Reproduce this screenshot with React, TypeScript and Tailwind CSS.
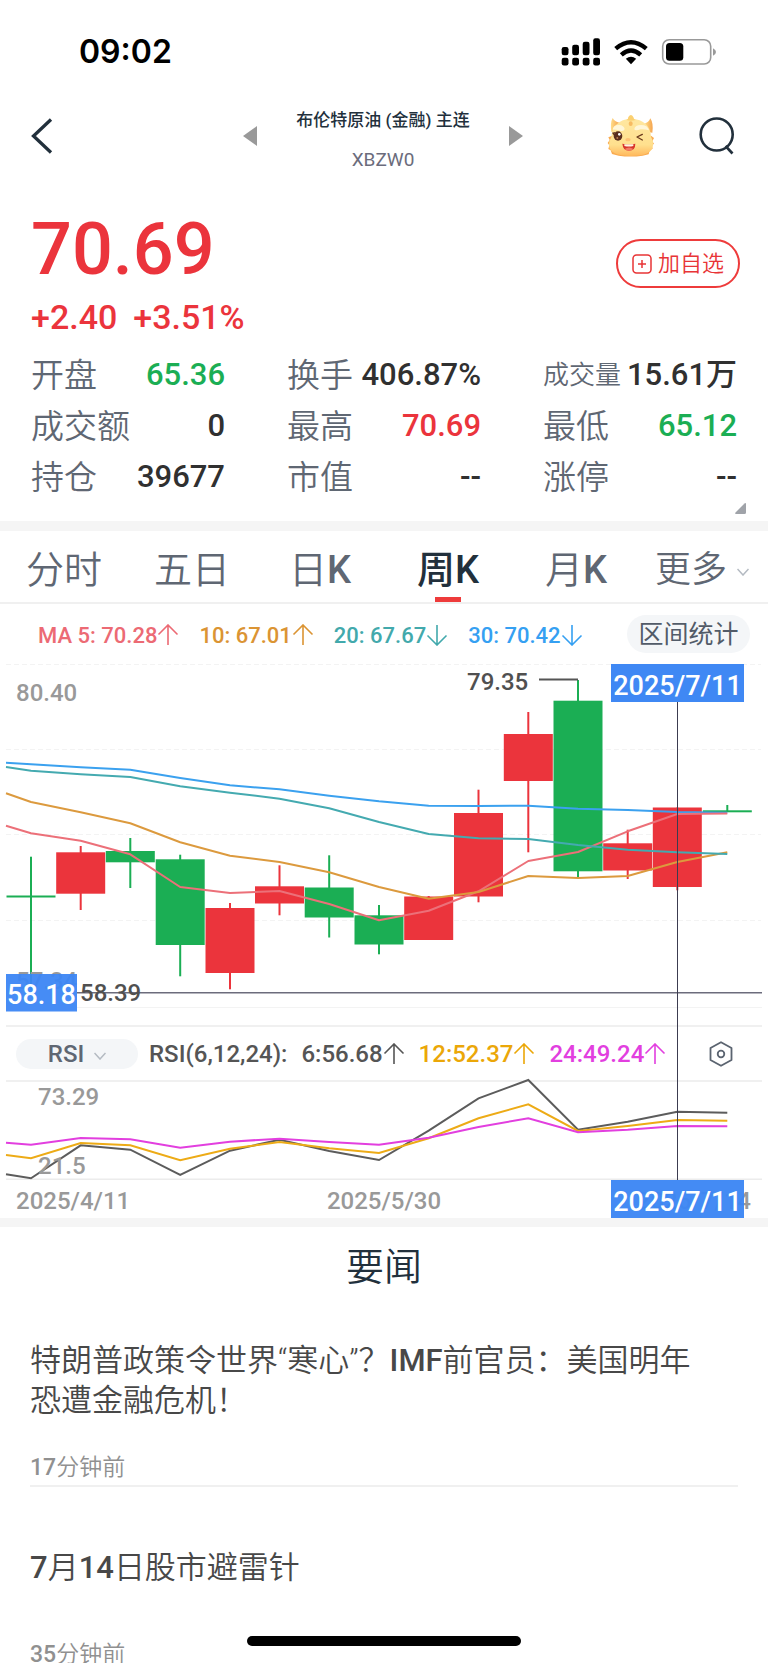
import React from "react";

const GREEN = "#1bae54";
const RED = "#eb343c";

type Candle = { color: string; top: number; bottom: number; high: number; low: number };

const xs = [31, 80.7, 130.3, 180.2, 230, 279.5, 329.2, 379, 428.7, 478.5, 528.3, 578, 627.7, 677.3, 727.3];

const candles: Candle[] = [
  { color: GREEN, top: 895.5, bottom: 897.5, high: 856.7, low: 990 },
  { color: RED, top: 852.3, bottom: 893.7, high: 846, low: 910 },
  { color: GREEN, top: 851, bottom: 862.3, high: 838, low: 888 },
  { color: GREEN, top: 859.3, bottom: 945, high: 854.7, low: 976.3 },
  { color: RED, top: 908, bottom: 973, high: 903, low: 989.3 },
  { color: RED, top: 886.3, bottom: 903.5, high: 865.3, low: 915.3 },
  { color: GREEN, top: 887.5, bottom: 917.5, high: 855.3, low: 937.5 },
  { color: GREEN, top: 915.3, bottom: 944.5, high: 905, low: 954.3 },
  { color: RED, top: 896.5, bottom: 940, high: 896, low: 940 },
  { color: RED, top: 813, bottom: 896.5, high: 789.7, low: 902.3 },
  { color: RED, top: 734, bottom: 781, high: 712, low: 852.3 },
  { color: GREEN, top: 700.7, bottom: 871.3, high: 680, low: 877.7 },
  { color: RED, top: 843.3, bottom: 870.5, high: 829.7, low: 879 },
  { color: RED, top: 807.5, bottom: 887, high: 807.5, low: 890.3 },
  { color: GREEN, top: 810.3, bottom: 812.3, high: 805, low: 812 },
];

const averages = [
  { color: "#3ba1ef", ys: [762.7, 764.3, 767.3, 769.7, 778, 785.3, 789.3, 795.7, 801.3, 805.7, 806, 805.7, 808.7, 810, 812, 812.7] },
  { color: "#ec7079", ys: [825.7, 833.3, 840.7, 854.3, 887, 893, 891, 904, 920.3, 910.7, 891.3, 861, 852, 831.3, 814, 813.5] },
  { color: "#dc9a3e", ys: [793.3, 802, 812.3, 823.3, 842.3, 855.7, 862, 872.3, 887, 898.7, 892, 876, 878, 876, 862, 852.3] },
  { color: "#44aab0", ys: [767, 770.7, 774.3, 777, 786.3, 792.7, 798.7, 808.3, 822, 834, 838.3, 839, 845, 849.7, 852.3, 854] },
];

const rsiLines = [
  { color: "#5c5c5c", ys: [1174.3, 1178.3, 1145.3, 1149.7, 1175, 1150.7, 1139.7, 1151, 1160, 1130.7, 1098.3, 1080, 1129.7, 1121.7, 1111.7, 1112.7] },
  { color: "#edab16", ys: [1155, 1158.3, 1143, 1145.3, 1160.3, 1148.7, 1142, 1148.3, 1153, 1138.3, 1118.3, 1104.3, 1131, 1126, 1120, 1120.7] },
  { color: "#e23fdf", ys: [1142.7, 1144.7, 1138, 1139.3, 1147.7, 1141.7, 1138.7, 1142, 1144.7, 1137.7, 1127, 1118.3, 1132.3, 1129.7, 1126, 1126.3] },
];

const toPoints = (ys: number[]) => ys.map((y, i) => `${i === 0 ? 6 : xs[i - 1]},${y}`).join(" ");

function Arrow({ down = false }: { down?: boolean }) {
  return (
    <svg className="h-[22px] w-[22px] shrink-0" viewBox="0 0 22 22" fill="none" stroke="currentColor" strokeWidth="1.6">
      {down ? <path d="M11 1v20M1.5 11.5 11 21l9.500-9.500" /> : <path d="M11 21V1M1.500 10.500 11 1l9.500 9.500" />}
    </svg>
  );
}

function StatusBar() {
  return (
    <div className="flex h-[104px] shrink-0 items-center justify-between pr-[51px] pl-[79px]">
      <span className="font-[Inter] text-[32px] font-semibold text-black">09:02</span>
      <svg className="h-[30px] w-[156px]" viewBox="561 36 156 30" aria-label="signal, wifi, battery">
        <g fill="#000">
          <rect x="561.7" y="46" width="6.800" height="8.200" rx="2.200" />
          <rect x="572.200" y="43.700" width="6.800" height="10.500" rx="2.200" />
          <rect x="582.700" y="40.700" width="6.800" height="13.500" rx="2.200" />
          <rect x="593.200" y="37.300" width="6.800" height="16.900" rx="2.200" />
          <rect x="561.700" y="56.800" width="6.800" height="7.700" rx="2.200" />
          <rect x="572.200" y="56.800" width="6.800" height="7.700" rx="2.200" />
          <rect x="582.700" y="56.800" width="6.800" height="7.700" rx="2.200" />
          <rect x="593.200" y="56.800" width="6.800" height="7.700" rx="2.200" />
          <path d="M631 63.200 625.800 57.800Q631 53.700 636.200 57.800Z" />
        </g>
        <g fill="none" stroke="#000" strokeWidth="4.400">
          <path d="M615.700 47.600Q631 34.800 646.300 47.600" />
          <path d="M621.300 53.800Q631 45.300 640.700 53.800" />
        </g>
        <rect x="662.700" y="38.700" width="48" height="24.300" rx="6.500" fill="none" stroke="#999" strokeWidth="1.600" />
        <rect x="666" y="42" width="17.300" height="17.800" rx="3.500" fill="#000" />
        <path d="M713 47.200q3 1.500 3 3.800t-3 3.800z" fill="#999" />
      </svg>
    </div>
  );
}

function Dragon() {
  return (
    <svg className="h-[44px] w-[48px]" viewBox="0 0 144 132" aria-hidden="true">
      <defs>
        <linearGradient id="face" x1="0" y1="0" x2="0" y2="1">
          <stop offset="0" stopColor="#ffe7a0" />
          <stop offset="0.7" stopColor="#ffe08e" />
          <stop offset="1" stopColor="#ffb85c" />
        </linearGradient>
        <linearGradient id="horn" x1="0" y1="0" x2="1" y2="0">
          <stop offset="0" stopColor="#ffdd8a" />
          <stop offset="1" stopColor="#f5a44e" />
        </linearGradient>
      </defs>
      <path d="M14 66 4 70l4 8-6 9 5 7-3 11 7 4 4 11 20 5q35 5 72 0l18-4 3-12 9-5-3-9 7-6-5-7 5-10-9-7z" fill="#f9ab50" />
      <path d="M13 54Q9 26 17 12q6 11 20 14l-4 26z" fill="url(#horn)" />
      <path d="M136 56q4-28-6-43-5 13-18 16l4 24z" fill="url(#horn)" />
      <path d="M72 14q30 1 44 16 14 12 16 38 8 12 6 26-2 32-66 32T6 94q-2-12 7-24 2-28 17-40 14-15 42-16z" fill="url(#face)" />
      <path d="M58 18q6-2 6-9 8-12 15 0 1 7 7 9-14 5-28 0z" fill="#fbd071" />
      <ellipse cx="71" cy="29" rx="6" ry="7" fill="#f7bb62" />
      <path d="M17 47q1-15 20-14 13 1 16 12-2 8-14 5-14-4-22-3z" fill="#fff6d8" />
      <path d="M82 45q2-12 20-12 20 0 24 16-14-4-25-3-18 6-19-1z" fill="#fff6d8" />
      <ellipse cx="33" cy="66" rx="13" ry="14" fill="#5b2e1e" />
      <path d="m15 56 10-2-5 10z" fill="#5b2e1e" />
      <circle cx="37" cy="61" r="4" fill="#fff" />
      <circle cx="31" cy="72" r="3" fill="#b9784e" />
      <path d="m106 61-16 8 16 9" fill="none" stroke="#6b3a1c" strokeWidth="4" strokeLinecap="round" strokeLinejoin="round" />
      <ellipse cx="63" cy="77" rx="8" ry="5" fill="#ffc277" />
      <path d="M46 89q20 4 39 0 0 21-19 21-18 0-20-21z" fill="#d8332b" />
      <path d="M52 91h27v5q-13 3-27 0z" fill="#fff4e0" />
      <path d="M53 105q13-9 26 0-6 5-13 5t-13-5z" fill="#f27a62" />
    </svg>
  );
}

function Header() {
  return (
    <header className="flex h-[90px] shrink-0 items-center justify-between pr-[33px] pb-[26px] pl-[31px]">
      <div className="flex flex-1">
        <button aria-label="返回">
          <svg className="h-[36px] w-[22px]" viewBox="0 0 22 36" fill="none" stroke="#22303c" strokeWidth="3.300">
            <path d="M20 1.500 2.500 18 20 34.500" />
          </svg>
        </button>
      </div>
      <div className="flex w-[280px] items-center justify-between">
        <button aria-label="上一个">
          <svg className="h-5 w-[14px]" viewBox="0 0 14 20" fill="#999"><path d="M14 0v20L0 10z" /></svg>
        </button>
        <div className="flex flex-col items-center gap-3 pt-2">
          <h1 className="text-[17px] leading-[28px] font-medium text-[#22303c]">布伦特原油 (金融) 主连</h1>
          <p className="text-[19px] leading-[28px] text-[#6b6c7c]">XBZW0</p>
        </div>
        <button aria-label="下一个">
          <svg className="h-5 w-[14px]" viewBox="0 0 14 20" fill="#999"><path d="M0 0v20l14-10z" /></svg>
        </button>
      </div>
      <div className="flex flex-1 items-center justify-end gap-11">
        <button aria-label="助手"><Dragon /></button>
        <button aria-label="搜索">
          <svg className="h-[38px] w-[36px]" viewBox="0 0 36 38" fill="none" stroke="#22303c" strokeWidth="2.600">
            <circle cx="17.700" cy="17.500" r="16" />
            <path d="m26.500 29 7 7.500" />
          </svg>
        </button>
      </div>
    </header>
  );
}

const stats = [
  { label: "开盘", value: "65.36", tone: "text-[#1bae54]" },
  { label: "换手", value: "406.87%", tone: "text-[#303030]" },
  { label: "成交量", value: "15.61万", tone: "text-[#303030]", small: true },
  { label: "成交额", value: "0", tone: "text-[#303030]" },
  { label: "最高", value: "70.69", tone: "text-[#eb343c]" },
  { label: "最低", value: "65.12", tone: "text-[#1bae54]" },
  { label: "持仓", value: "39677", tone: "text-[#303030]" },
  { label: "市值", value: "--", tone: "text-[#303030]" },
  { label: "涨停", value: "--", tone: "text-[#303030]" },
];

function Quote() {
  return (
    <section className="relative shrink-0 px-[31px] pb-[18px]">
      <div className="flex items-start justify-between">
        <div className="font-medium text-[#eb343c]">
          <p className="pt-[20px] text-[72px] leading-[72px]">70.69</p>
          <p className="flex gap-[16px] pt-[11px] text-[34px] leading-[40px]">
            <span>+2.40</span>
            <span>+3.51%</span>
          </p>
        </div>
        <button className="mt-[45px] -mr-[3px] flex h-[49px] w-[124px] items-center justify-center gap-[6px] rounded-full border-2 border-[#ee3b3b] text-[22px] font-[350] text-[#e83436]">
          <svg className="h-5 w-5" viewBox="0 0 20 20" fill="none" stroke="currentColor" strokeWidth="1.500">
            <rect x="1" y="1" width="18" height="18" rx="3.500" />
            <path d="M10 6v8M6 10h8" />
          </svg>
          加自选
        </button>
      </div>
      <dl className="grid grid-cols-3 gap-x-[62px] pt-[13px]">
        {stats.map((s) => (
          <div key={s.label} className="flex h-[51px] items-center justify-between whitespace-nowrap">
            <dt className={s.small ? "text-[26px] font-[350] text-[#5f6773]" : "text-[33px] font-[350] text-[#5f6773]"}>{s.label}</dt>
            <dd className={`text-[31px] font-medium ${s.tone}`}>{s.value}</dd>
          </div>
        ))}
      </dl>
      <svg className="absolute right-[22px] bottom-[7px] h-[11px] w-[11px]" viewBox="0 0 11 11" fill="#a0a3a9">
        <path d="M11 1v8.500q0 1.500-1.500 1.500H1q-1.500-.5-.5-1.500l9-9Q11-.5 11 1z" />
      </svg>
    </section>
  );
}

const tabs = ["分时", "五日", "日K", "周K", "月K"];

function Tabs() {
  return (
    <nav className="grid h-[73px] shrink-0 grid-cols-6 border-b-2 border-[#f0f0f0]">
      {tabs.map((t) =>
        t === "周K" ? (
          <button key={t} aria-current="page" className="relative pt-[7px] text-[38px] font-medium text-[#22303c]">
            {t}
            <span className="absolute bottom-0 left-1/2 h-[5px] w-[26px] -translate-x-1/2 bg-[#ee3b3b]" />
          </button>
        ) : (
          <button key={t} className="pt-[7px] text-[38px] font-[350] text-[#5f6773]">
            {t[0]}
            <span className={t[1] === "K" ? "font-medium" : "font-[350]"}>{t[1]}</span>
          </button>
        ),
      )}
      <button className="flex items-center justify-center gap-[10px] pt-[7px] pr-1 text-[36px] font-[350] whitespace-nowrap text-[#5f6773]">
        更多
        <svg className="mt-1 h-2 w-3" viewBox="0 0 12 8" fill="none" stroke="#b4bac2" strokeWidth="1.500"><path d="m.5 1 5.500 6 5.500-6" /></svg>
      </button>
    </nav>
  );
}

function Legend() {
  return (
    <div className="flex h-[51px] shrink-0 items-start justify-between pt-[11px] pr-[18px] pl-[38px] text-[22px] whitespace-nowrap">
      <div className="flex h-[40px] gap-[20px] font-medium">
        <span className="flex items-center text-[#ec6a74]">MA 5: 70.28<Arrow /></span>
        <span className="flex items-center text-[#db9433]">10: 67.01<Arrow /></span>
        <span className="flex items-center text-[#42a9ac]">20: 67.67<Arrow down /></span>
        <span className="flex items-center text-[#35a0f2]">30: 70.42<Arrow down /></span>
      </div>
      <button className="h-[38px] w-[123px] rounded-full bg-[#f4f6f8] text-[25px] leading-[40px] text-[#525b68]">区间统计</button>
    </div>
  );
}

function PriceChart() {
  return (
    <svg className="block w-full" viewBox="0 655 768 370" role="img" aria-label="周K线">
      <g stroke="#f3f3f3" strokeWidth="1" strokeDasharray="5 3">
        {[664.5, 749.5, 834.500, 920.500].map((y) => <line key={y} x1="6" x2="761" y1={y} y2={y} />)}
      </g>
      <line x1="6" x2="762" y1="1007.500" y2="1007.500" stroke="#f3f3f3" />
      {candles.map((c, i) => (
        <g key={i} fill={c.color}>
          <rect x={xs[i] - 1} y={c.high} width="2" height={c.low - c.high} />
          <rect x={xs[i] - 24.500} y={c.top} width="49" height={c.bottom - c.top} />
        </g>
      ))}
      {averages.map((a) => (
        <polyline key={a.color} points={toPoints(a.ys)} fill="none" stroke={a.color} strokeWidth="2" strokeLinejoin="round" />
      ))}
      <line x1="539" x2="578" y1="679.500" y2="679.500" stroke="#555" strokeWidth="2" />
      <line x1="77" x2="762" y1="992.800" y2="992.800" stroke="#6c6c7c" strokeWidth="1.500" />
      <g fontSize="24" fontWeight="500">
        <text x="16" y="701" fill="#999">80.40</text>
        <text x="16" y="989" fill="#999">57.34</text>
        <text x="467" y="690" fill="#505050">79.35</text>
        <text x="80" y="1001" fill="#505050">58.39</text>
      </g>
      <rect x="6" y="974" width="71" height="37.500" fill="#3c86f4" fillOpacity="0.95" />
      <text x="41.500" y="1004" fontSize="27" fontWeight="500" fill="#fff" textAnchor="middle">58.18</text>
      <rect x="611" y="664" width="133" height="38" fill="#3f88f4" />
      <text x="677.500" y="695" fontSize="27" fontWeight="500" fill="#fff" textAnchor="middle">2025/7/11</text>
    </svg>
  );
}

function RsiToolbar() {
  return (
    <div className="mx-[6px] flex h-[57px] items-center border-y-2 border-[#f0f0f0] pt-px pl-[10px] text-[24px] whitespace-nowrap">
      <button className="flex h-[30px] w-[122px] items-center justify-center gap-[10px] rounded-full bg-[#f4f6f8] font-medium text-[#5f6773]">
        RSI
        <svg className="mt-1 h-2 w-3" viewBox="0 0 12 8" fill="none" stroke="#b4bac2" strokeWidth="1.500"><path d="m.5 1 5.500 6 5.500-6" /></svg>
      </button>
      <div className="flex flex-1 items-center gap-[14px] pl-[11px] font-medium text-[#555]">
        <span>RSI(6,12,24):</span>
        <span className="flex items-center">6:56.68<Arrow /></span>
        <span className="flex items-center text-[#eba708]">12:52.37<Arrow /></span>
        <span className="flex items-center text-[#e23fdf]">24:49.24<Arrow /></span>
      </div>
      <button aria-label="指标设置" className="mr-[29px]">
        <svg className="h-[26px] w-[24px]" viewBox="0 0 24 26" fill="none" stroke="#5b6470" strokeWidth="1.800">
          <path d="M12 1.200 22.500 7v12L12 24.800 1.500 19V7z" strokeLinejoin="round" />
          <circle cx="12" cy="13" r="3.300" />
        </svg>
      </button>
    </div>
  );
}

function RsiChart() {
  return (
    <svg className="block w-full overflow-visible" viewBox="0 1082 768 136" role="img" aria-label="RSI">
      <line x1="6" x2="762" y1="1179.200" y2="1179.200" stroke="#ececec" strokeWidth="1.500" />
      {rsiLines.map((l) => (
        <polyline key={l.color} points={toPoints(l.ys)} fill="none" stroke={l.color} strokeWidth="2" />
      ))}
      <g fontSize="24" fill="#999" fontWeight="500">
        <text x="38" y="1105">73.29</text>
        <text x="38" y="1174">21.5</text>
        <text x="16" y="1209">2025/4/11</text>
        <text x="384" y="1209" textAnchor="middle">2025/5/30</text>
        <text x="751" y="1209" textAnchor="end">2025/7/14</text>
      </g>
      <rect x="611" y="1180" width="133" height="38" fill="#3c86f4" fillOpacity="0.96" />
      <text x="677.500" y="1211" fontSize="27" fontWeight="500" fill="#fff" textAnchor="middle">2025/7/11</text>
    </svg>
  );
}

const news = [
  { title: "特朗普政策令世界“寒心”？IMF前官员：美国明年恐遭金融危机！", time: "17分钟前" },
  { title: "7月14日股市避雷针", time: "35分钟前" },
];

function MixedText({ text }: { text: string }) {
  return text.split(/([A-Za-z0-9]+)/).map((part, i) =>
    i % 2 === 1 ? <span key={i} className="font-medium">{part}</span> : part,
  );
}

function News() {
  return (
    <section>
      <h2 className="flex h-20 items-center justify-center text-[38px] font-[350] text-[#22303c]">要闻</h2>
      <ul className="px-[30px]">
        {news.map((n) => (
          <li key={n.time} className="border-b-2 border-[#f0f0f0] pt-[61px] pb-[5px] first:pt-[34px]">
            <a href="#news" className="block">
              <h3 className="min-h-[60px] pr-[30px] text-[31px] leading-[40px] font-[350] text-[#484848]"><MixedText text={n.title} /></h3>
              <p className="pt-[35px] text-[23px] leading-[24px] font-[350] text-[#909090]"><MixedText text={n.time} /></p>
            </a>
          </li>
        ))}
      </ul>
    </section>
  );
}

export default function App() {
  return (
    <div className="h-screen overflow-x-hidden overflow-y-auto bg-white font-[Roboto,'Noto_Sans_CJK_SC',sans-serif] [scrollbar-width:none]">
      <StatusBar />
      <Header />
      <Quote />
      <div className="h-[10px] bg-[#f5f5f5]" />
      <Tabs />
      <Legend />
      <div className="relative">
        <PriceChart />
        <RsiToolbar />
        <RsiChart />
        <div className="absolute top-[47px] bottom-[38px] left-[88.15%] w-px bg-[#3c3c50]" />
      </div>
      <div className="h-[9px] bg-[#f5f5f5]" />
      <News />
      <div className="fixed bottom-[17px] left-1/2 h-[10px] w-[274px] -translate-x-1/2 rounded-full bg-black" />
    </div>
  );
}
